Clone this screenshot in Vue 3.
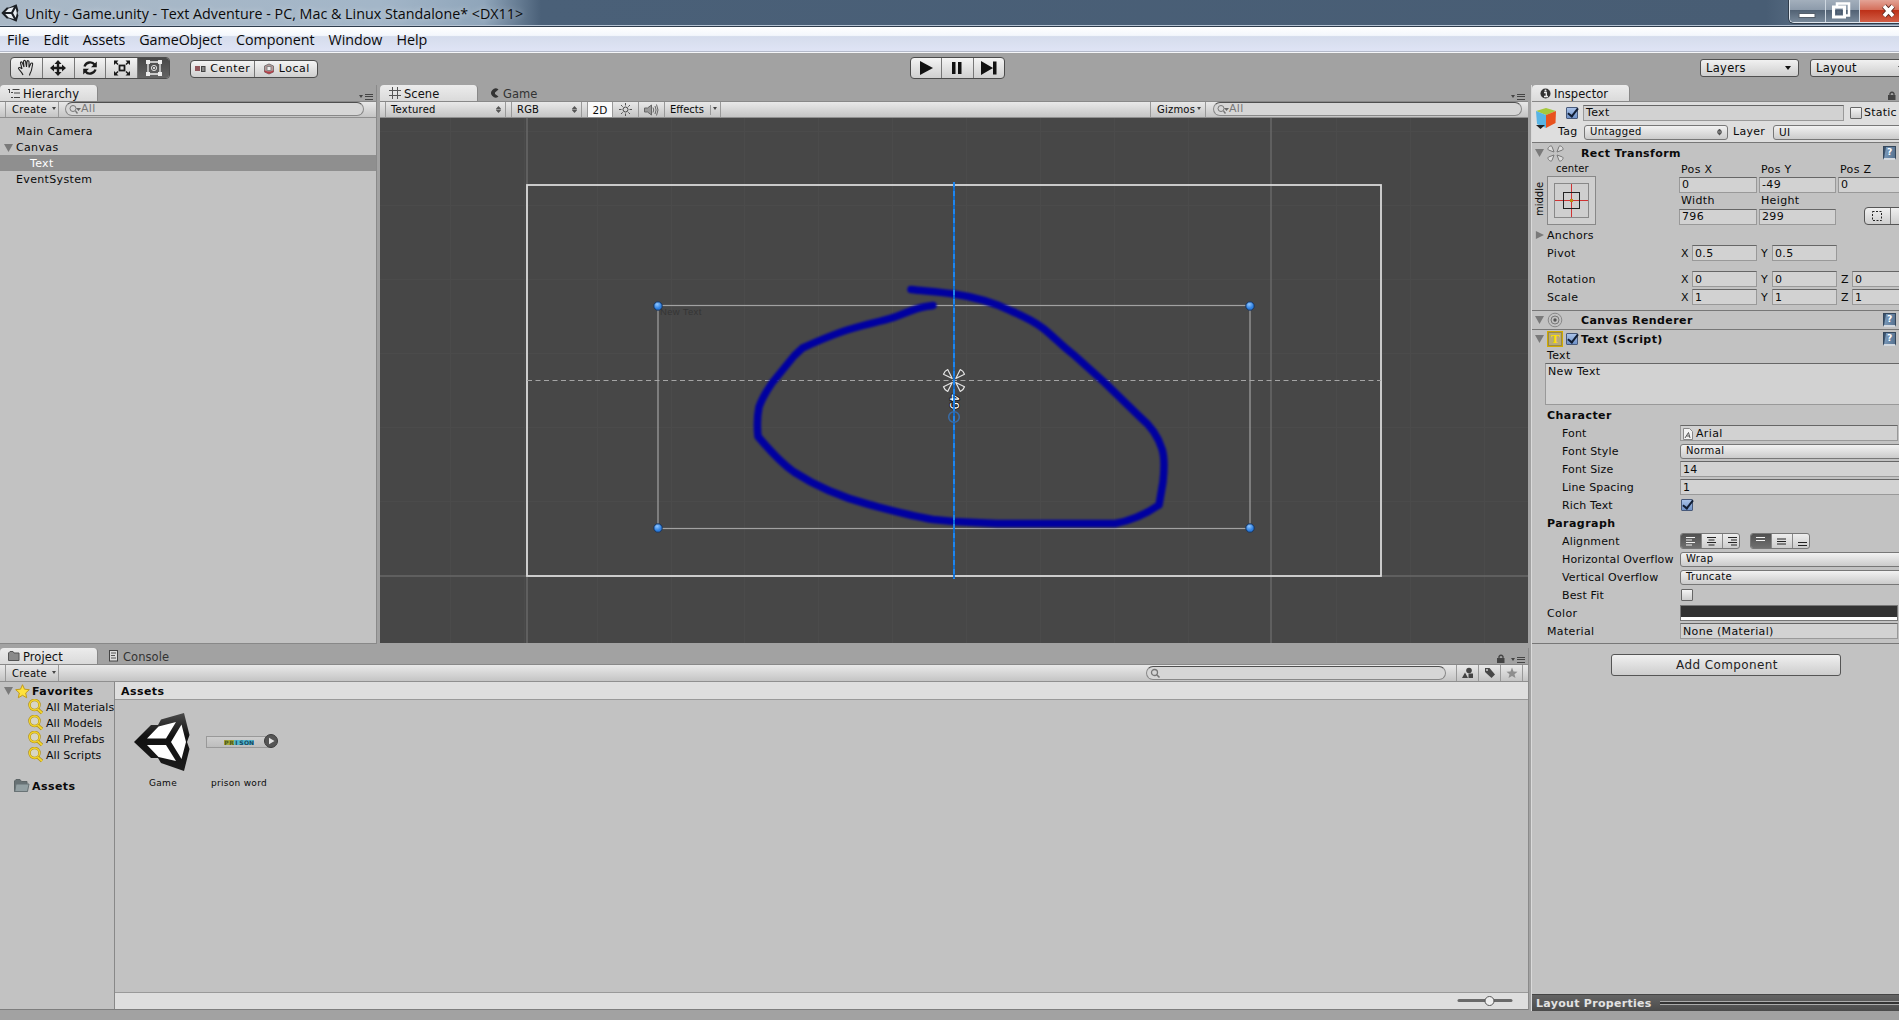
<script setup>
const menus = ['File', 'Edit', 'Assets', 'GameObject', 'Component', 'Window', 'Help']
const searches = ['All Materials', 'All Models', 'All Prefabs', 'All Scripts']
const vectors = [
  { name: 'Rotation', value: '0' },
  { name: 'Scale', value: '1' }
]
const gridX = [450, 524, 597, 671, 744, 818, 892, 966, 1040, 1114, 1188, 1336, 1410, 1484]
const gridY = [131, 205, 279, 353, 427, 501]
const alignLines = [
  'M5 3.5h9M5 6h6M5 8.500h9M5 11h6',
  'M5 3.500h9M6.500 6h6M5 8.500h9M6.500 11h6',
  'M5 3.500h9M8 6h6M5 8.500h9M8 11h6'
]
const vertLines = ['M5 3.500h9M5 6.500h9', 'M5 5h9M5 7.500h9M5 10h9', 'M5 8.500h9M5 11.500h9']
</script>

<template>
  <div class="app">
    <header class="titlebar">
      <svg class="logo" width="18" height="18" viewBox="0 0 60 60">
        <path fill="#1b1f24" d="M1 30 19 12 27 12 52 1 58 22 55 30 58 38 52 59 27 48 19 48Z" />
        <path fill="#e9eef2" d="M14 27 25 15 43 10 34 27ZM14 33 34 33 43 50 25 45ZM40 30 49 14 53 30 49 46Z" />
      </svg>
      <span class="title">Unity - Game.unity - Text Adventure - PC, Mac &amp; Linux Standalone* &lt;DX11&gt;</span>
      <div class="winbtns">
        <span class="wb min"><svg width="35" height="23"><rect x="9" y="13.500" width="16" height="4" fill="#fff" stroke="#56606c" /></svg></span>
        <span class="wb max"><svg width="33" height="23"><path d="M11 7V3.500h12v12h-3" fill="none" stroke="#fff" stroke-width="2.500" /><rect x="7.500" y="7" width="11" height="10" fill="none" stroke="#fff" stroke-width="3" /><rect x="10.500" y="10" width="5" height="4" fill="none" stroke="#4a5a70" /></svg></span>
        <span class="wb close"><svg width="42" height="23"><path d="M24 6 33 16M33 6 24 16" stroke="#5a2a24" stroke-width="5.500" /><path d="M24 6 33 16M33 6 24 16" stroke="#fff" stroke-width="3.600" /></svg></span>
      </div>
    </header>
    <nav class="menubar"><span v-for="m in menus" :key="m">{{ m }}</span></nav>

    <div class="toolbar">
      <div class="group tools">
        <span><svg width="20" height="20" viewBox="0 0 20 20"><path d="M7 17C6 14 3.500 12.500 2.500 10.500 2.500 9 4.500 9 6 11L4.500 5C4.500 3.500 6 3.500 6.500 5L8 9 7.500 3.500C7.700 2 9.300 2 9.600 3.500L10.500 9 11 3.500C11.500 2.200 13 2.500 13 4V9.500L14.800 5.500C15.500 4.500 17 5 16.600 6.500L15.500 12C15 14.500 13.500 15.500 13.500 17.500" fill="none" stroke="#222" stroke-width="1.100" /></svg></span>
        <span><svg width="18" height="18" viewBox="0 0 18 18"><path d="M9 1 12.500 5H10.200V7.800H13V5.500L17 9 13 12.500V10.200H10.200V13H12.500L9 17 5.500 13H7.800V10.200H5V12.500L1 9 5 5.500V7.800H7.800V5H5.500Z" fill="#1a1a1a" /></svg></span>
        <span><svg width="18" height="18" viewBox="0 0 18 18"><path d="M3.500 7.500C5 3 11 2 13.500 5.500M14.500 10.500C13 15 7 16 4.500 12.500" fill="none" stroke="#1a1a1a" stroke-width="2.300" /><path d="M15.800 2.500V8.300H10ZM2.200 15.500V9.700H8Z" fill="#1a1a1a" /></svg></span>
        <span><svg width="20" height="18" viewBox="0 0 20 18"><rect x="7.500" y="6.500" width="5" height="5" fill="none" stroke="#1a1a1a" stroke-width="1.800" /><path d="M2 1.500H6.500L2 6ZM18 1.500H13.500L18 6ZM2 16.500H6.500L2 12ZM18 16.500H13.500L18 12Z" fill="#1a1a1a" /><path d="M3 2.500 6 5.500M17 2.500 14 5.500M3 15.500 6 12.500M17 15.500 14 12.500" stroke="#1a1a1a" stroke-width="1.500" /></svg></span>
        <span class="on"><svg width="18" height="18" viewBox="0 0 18 18"><path d="M3 3H15V15H3Z" fill="none" stroke="#eee" stroke-width="1.300" /><circle cx="9" cy="9" r="2.600" fill="none" stroke="#ddd" /><circle cx="9" cy="9" r="1" fill="#fff" /><path d="M1 1h4v4H1zM13 1h4v4h-4zM1 13h4v4H1zM13 13h4v4h-4z" fill="#eee" /></svg></span>
      </div>
      <div class="group pivot">
        <span><svg width="11" height="8"><rect x="0" y="1" width="5" height="5" fill="#91565b" /><rect x="6.500" y="1.500" width="3.500" height="5" fill="#888" stroke="#444" /></svg>Center</span>
        <span><svg width="12" height="12"><path d="M1.500 3 6 1 10.500 3V9L6 11 1.500 9Z" fill="#b99" stroke="#777" /><path d="M1.500 7C4 9 8 9 10.500 7V9L6 11 1.500 9Z" fill="#b23f48" /><rect x="4" y="3.500" width="4" height="4" fill="#eee" stroke="#888" /></svg>Local</span>
      </div>
      <div class="group play">
        <span><svg width="14" height="14"><path d="M1 0 14 7 1 14Z" fill="#111" /></svg></span>
        <span><svg width="12" height="14"><path d="M1 1h3.500v12H1zM7 1h3.500v12H7z" fill="#111" /></svg></span>
        <span><svg width="16" height="14"><path d="M0 0 12 7 0 14ZM12 .5h3.500v13H12z" fill="#111" /></svg></span>
      </div>
      <div class="drop layers">Layers<i class="dn"></i></div>
      <div class="drop layout">Layout<i class="dn"></i></div>
    </div>

    <div class="work">
      <div class="leftside">
        <div class="upper">
          <section class="hier">
            <div class="tabs">
              <span class="tab active"><svg width="12" height="11"><path d="M0 1.500h2M3 4.500h2M3 9.500h2M4.500 1.500h7M6 5h6M6 9.500h6M1.500 2v3" stroke="#444" fill="none" /></svg>Hierarchy</span>
              <span class="pmenu"><i></i><b></b></span>
            </div>
            <div class="strip">
              <span class="create">Create<i class="dn s"></i></span>
              <span class="search"><svg width="12" height="11"><circle cx="4" cy="4.500" r="3" fill="none" stroke="#777" /><path d="M6.500 7 8.500 9.500" stroke="#777" stroke-width="1.400" /><path d="M7 4h5l-2.500 3z" fill="#666" /></svg>All</span>
            </div>
            <ul class="list">
              <li>Main Camera</li>
              <li class="parent"><i class="tri"></i>Canvas</li>
              <li class="picked">Text</li>
              <li>EventSystem</li>
            </ul>
          </section>

          <section class="scene">
            <div class="tabs">
              <span class="tab active"><svg width="12" height="12"><path d="M3.500 0v12M8.500 0v12M0 3.500h12M0 8.500h12" stroke="#555" /></svg>Scene</span>
              <span class="tab"><svg width="9" height="10"><path d="M8.500 1.500A4.500 4.500 0 1 0 8.500 8.500L5 6V4.500Z" fill="#333" /></svg>Game</span>
              <span class="pmenu"><i></i><b></b></span>
            </div>
            <div class="strip">
              <span class="cell tex">Textured<i class="ud"></i></span>
              <span class="cell rgb">RGB<i class="ud"></i></span>
              <span class="cell two">2D</span>
              <span class="cell sun"><svg width="13" height="13" viewBox="0 0 13 13"><circle cx="6.500" cy="6.500" r="2.500" fill="none" stroke="#444" /><path d="M6.500 0v2.500M6.500 10.500V13M0 6.500h2.500M10.500 6.500H13M2 2l1.700 1.700M9.300 9.300 11 11M11 2 9.300 3.700M2 11l1.700-1.700" stroke="#555" /></svg></span>
              <span class="cell snd"><svg width="15" height="12"><path d="M.5 4h3L7.500 1v10L3.500 8h-3z" fill="#999" stroke="#666" /><path d="M9 3.500Q10.500 6 9 8.500M11 2Q13.200 6 11 10M12.500.5Q15.500 6 12.500 11.500" fill="none" stroke="#666" /></svg></span>
              <span class="cell eff">Effects<em></em><i class="dn s"></i></span>
              <span class="cell giz">Gizmos<i class="dn s"></i></span>
              <span class="search"><svg width="12" height="11"><circle cx="4" cy="4.500" r="3" fill="none" stroke="#777" /><path d="M6.500 7 8.500 9.500" stroke="#777" stroke-width="1.400" /><path d="M7 4h5l-2.500 3z" fill="#666" /></svg>All</span>
            </div>
            <svg class="view" width="1148" height="525" viewBox="380 118 1148 525">
              <defs>
                <radialGradient id="knob" cx=".4" cy=".3"><stop offset="0" stop-color="#8fc6ff" /><stop offset="1" stop-color="#2d7fe0" /></radialGradient>
                <filter id="soft" x="-5%" y="-5%" width="110%" height="110%"><feGaussianBlur stdDeviation=".9" /></filter>
              </defs>
              <rect x="380" y="118" width="1148" height="525" fill="#474747" />
              <g stroke="#4b4b4b">
                <path v-for="x in gridX" :key="'x' + x" :d="`M${x}.5 118V643`" />
                <path v-for="y in gridY" :key="'y' + y" :d="`M380 ${y}.5H1528`" />
              </g>
              <path d="M527 118V643M1271 118V643M380 576H1528" stroke="#686868" stroke-width="1.500" />
              <rect x="527" y="185" width="854" height="391" fill="none" stroke="#d9d9d9" stroke-width="1.800" />
              <rect x="658" y="305.500" width="592" height="223" fill="none" stroke="#a2a2a2" stroke-width="1.200" />
              <path d="M527 380.500H1381" stroke="#a5a5a5" stroke-dasharray="5 3.500" />
              <text x="660" y="315" font-size="9.500" fill="#353535" font-family="Liberation Sans, sans-serif">New Text</text>
              <g filter="url(#soft)">
                <path d="M911 289.500C925 291 940 292 954 294 975 297 993 302 1011 311 1023 316 1034 321 1044 329 1055 338 1063 347 1074 355L1104 382 1140 417C1151 426 1158 436 1162 449 1165 458 1164.500 468 1163 482L1159 505C1146 514 1130 521 1115 523.500H997L954 521.500 933 519.500C911 516 890 510 869 504.500 841 497 817 487 794 472 781 463 771 452 758 436.500 757 427 757 417 759 407 763 396 768 389 772 383L794 356 802.500 348C820 340 836 333 854 328 866 324 879 322 890 318.500 904 314 915 308 926 306.500L933 305.500" fill="none" stroke="#0000a0" stroke-width="7.500" stroke-linecap="round" stroke-linejoin="round" />
              </g>
              <g fill="none" stroke="#e4e4e4" stroke-width="1.200" stroke-linejoin="round">
                <path v-for="s in ['1 1', '-1 1', '1 -1', '-1 -1']" :key="s" :transform="`translate(954 380.500) scale(${s.replace(' ', ',')})`" d="M1.800 2 10.500 6.300Q9.500 9.500 6.300 11Z" />
              </g>
              <text x="0" y="0" transform="translate(949.500 394) rotate(90)" font-size="12" fill="#fff" stroke="#111" stroke-width="1.500" paint-order="stroke" font-family="DejaVu Sans, sans-serif">49</text>
              <path d="M954 182V579" stroke="#0a70dc" stroke-width="1.800" />
              <path d="M954 182V579" stroke="#2389f0" stroke-width="1.800" stroke-dasharray="5 4" />
              <circle cx="954" cy="417" r="5.300" fill="none" stroke="#3a6ca5" stroke-width="1.600" />
              <g v-for="p in [[658, 306], [1250, 306], [658, 528], [1250, 528]]" :key="p.join()">
                <circle :cx="p[0]" :cy="p[1]" r="4.200" fill="url(#knob)" stroke="#16335e" />
              </g>
            </svg>
          </section>
        </div>

        <section class="project">
          <div class="tabs">
            <span class="tab active"><svg width="12" height="10"><path d="M.5 9.500V2L2 .5H5L6 2h5v7.500z" fill="#8a8a8a" stroke="#555" /></svg>Project</span>
            <span class="tab"><svg width="10" height="12"><rect x=".5" y=".5" width="8" height="10.500" fill="#ddd" stroke="#444" /><path d="M2 3h5M2 5.500h4M2 8h5" stroke="#555" /></svg>Console</span>
            <svg class="lock" width="8" height="9"><path d="M2 4V2.500Q4 0 6 2.500V4" fill="none" stroke="#444" stroke-width="1.300" /><rect y="4" width="7.500" height="5" fill="#444" /></svg>
            <span class="pmenu"><i></i><b></b></span>
          </div>
          <div class="strip">
            <span class="create">Create<i class="dn s"></i></span>
            <span class="search"><svg width="12" height="11"><circle cx="4.500" cy="4.500" r="3" fill="none" stroke="#777" stroke-width="1.300" /><path d="M7 7 9.500 9.500" stroke="#777" stroke-width="1.600" /></svg></span>
            <span class="pb"><svg width="12" height="12"><circle cx="7" cy="3.500" r="2.800" fill="#444" /><path d="M0 11 3 5.500 6 11ZM6.500 6.500h4.500V11H6.500Z" fill="#444" /></svg></span>
            <span class="pb"><svg width="12" height="12"><path d="M1 1h4.500L11 7.500 7.500 11 1 5Z" fill="#484848" /><circle cx="3" cy="3" r="1" fill="#ccc" /></svg></span>
            <span class="pb"><svg width="12" height="12"><path d="M6 .5 7.500 4.500 11.500 4.700 8.500 7.200 9.500 11 6 9 2.500 11 3.500 7.200.5 4.700 4.500 4.500Z" fill="#8e8e8e" /></svg></span>
            <span class="pb end"></span>
          </div>
          <div class="pbody">
            <div class="tree">
              <div class="trow fav"><i class="tri"></i><svg width="15" height="15"><path d="M7.500.7 9.500 5.200 14.300 5.700 10.700 9 11.700 13.800 7.500 11.300 3.300 13.800 4.300 9 .7 5.700 5.500 5.200Z" fill="#ffe23b" stroke="#c09a1e" /></svg><strong>Favorites</strong></div>
              <div v-for="s in searches" :key="s" class="trow sub"><svg width="16" height="16"><circle cx="6.500" cy="6" r="5" fill="#d8d6c4" stroke="#b08e14" stroke-width="2.400" /><circle cx="6.500" cy="6" r="5" fill="none" stroke="#f4d62c" stroke-width="1.300" /><path d="M9.500 10 14 14" stroke="#b08e14" stroke-width="3.200" /><path d="M9.500 10 14 14" stroke="#f4d62c" stroke-width="1.700" /></svg><span>{{ s }}</span></div>
              <div class="trow root"><svg width="16" height="14"><path d="M.5 12.500V2L2 .5H6L7.500 2.500H13V12.500Z" fill="#677174" stroke="#5d6567" /><path d="M2 5H15L13.500 12.500H.8Z" fill="#93a0a3" stroke="#697376" /></svg><strong>Assets</strong></div>
            </div>
            <div class="assets">
              <div class="crumb">Assets</div>
              <div class="grid">
                <div class="asset">
                  <div class="thumb"><svg width="58" height="60" viewBox="0 0 58 60"><defs><linearGradient id="ug" x1="0" y1="0" x2="0" y2="1"><stop offset="0" stop-color="#4a4a4a" /><stop offset=".4" stop-color="#111" /><stop offset="1" stop-color="#1c1c1c" /></linearGradient></defs><path fill="url(#ug)" d="M1 30 18 13 25 13 28 7.500 51 1 56.500 23 54 30 56.500 37 51 59 28 51 25 46 18 46Z" /><path fill="#fff" d="M14 26.500 25.500 14.500 43 10 33 26.500ZM14 33 33 33 43 49 25.500 45ZM38 30 48.500 12.500 53 30 48.500 47Z" /></svg></div>
                  <span>Game</span>
                </div>
                <div class="asset pw">
                  <div class="thumb"><div class="word"><b>P</b><b>R</b><b>I</b><b>S</b><b>O</b><b>N</b></div><svg class="go" width="16" height="16"><circle cx="8" cy="8" r="6.500" fill="#555" stroke="#3b3b3b" /><path d="M6 4.800 11.500 8 6 11.200Z" fill="#e3e3e3" /></svg></div>
                  <span>prison word</span>
                </div>
              </div>
              <div class="foot"><svg width="58" height="12"><path d="M2 5.500H54" stroke="#6a6a6a" stroke-width="3" stroke-linecap="round" /><circle cx="32.500" cy="6" r="4.500" fill="#eee" stroke="#555" /></svg></div>
            </div>
          </div>
        </section>
      </div>

      <aside class="insp">
        <div class="tabs">
          <span class="tab active"><svg width="11" height="11"><circle cx="5.500" cy="5.500" r="5" fill="#333" /><path d="M4 4.500h2.300V8M4 8.500h4" stroke="#eee" fill="none" stroke-width="1.300" /><circle cx="5.500" cy="2.500" r="1" fill="#eee" /></svg>Inspector</span>
          <svg class="lock" width="8" height="9"><path d="M2 4V2.500Q4 0 6 2.500V4" fill="none" stroke="#444" stroke-width="1.300" /><rect y="4" width="7.500" height="5" fill="#444" /></svg>
        </div>
        <div class="ohead">
          <svg class="cube" width="24" height="24"><path d="M2 4 12 1 22 4 12 8Z" fill="#a5c83c" /><path d="M2 4 12 8V21L3 17Z" fill="#58b4e4" /><path d="M12 8 22 4 21.500 16 12 21Z" fill="#e8521e" /><path d="M2 18h9L6.500 22Z" fill="#222" /></svg>
          <div class="ofields">
            <div class="orow"><i class="check on"></i><span class="field name">Text</span><i class="check"></i><span class="st">Static</span></div>
            <div class="orow two"><span class="tag">Tag</span><span class="sel tagsel">Untagged<i class="ud"></i></span><span class="lay">Layer</span><span class="sel laysel">UI</span></div>
          </div>
        </div>

        <div class="chead rt"><i class="tri"></i><svg width="17" height="17" viewBox="-8.500 -8.500 17 17"><path v-for="a in [0, 90, 180, 270]" :key="a" :transform="`rotate(${a})`" d="M1.500 1.500 3.500 7C5 9 9 5 7 3.500Z" fill="#ddd" stroke="#777" /></svg><strong>Rect Transform</strong><i class="help">?</i></div>
        <div class="rect">
          <div class="anchor">
            <span class="ac">center</span><span class="am">middle</span>
            <svg width="49" height="49"><rect x=".5" y=".5" width="48" height="48" fill="#cfcfcf" stroke="#888" /><rect x="7.500" y="7.500" width="34" height="34" fill="none" stroke="#888" /><path d="M24.500 8v33M8 24.500h33" stroke="#cf3333" /><rect x="16.500" y="16.500" width="16" height="16" fill="none" stroke="#222" /><rect x="23" y="23" width="3" height="3" fill="#b98a12" /></svg>
          </div>
          <div class="pos">
            <span>Pos X</span><span>Pos Y</span><span>Pos Z</span>
            <b class="field">0</b><b class="field">-49</b><b class="field">0</b>
            <span>Width</span><span>Height</span><span></span>
            <b class="field">796</b><b class="field">299</b><div class="blue"><svg width="12" height="12"><rect x="1.500" y="1.500" width="9" height="9" fill="none" stroke="#222" stroke-dasharray="2 1.500" /></svg></div>
          </div>
        </div>
        <div class="prow anchors"><i class="tri r"></i><span class="lbl">Anchors</span></div>
        <div class="prow"><label>Pivot</label><span class="ax">X</span><b class="field v">0.5</b><span class="ax">Y</span><b class="field v">0.5</b></div>
        <div class="gap8"></div>
        <div v-for="v in vectors" :key="v.name" class="prow"><label>{{ v.name }}</label><span class="ax">X</span><b class="field v">{{ v.value }}</b><span class="ax">Y</span><b class="field v">{{ v.value }}</b><span class="ax">Z</span><b class="field v last">{{ v.value }}</b></div>

        <div class="chead cr"><i class="tri"></i><svg width="16" height="16"><circle cx="8" cy="8" r="6.800" fill="none" stroke="#888" /><circle cx="8" cy="8" r="4" fill="none" stroke="#777" /><circle cx="8" cy="8" r="1.700" fill="#555" /></svg><strong>Canvas Renderer</strong><i class="help">?</i></div>
        <div class="chead"><i class="tri"></i><span class="ticon">T</span><i class="check on"></i><strong class="near">Text (Script)</strong><i class="help">?</i></div>
        <div class="tlabel">Text</div>
        <div class="field area">New Text</div>
        <div class="prow bold"><span class="lbl">Character</span></div>
        <div class="prow in"><label>Font</label><span class="field w obj"><svg width="10" height="12"><path d="M.5.500h6l3 3v8h-9z" fill="#f3f3f3" stroke="#888" /><path d="M2 10 5.500 4.500 7 10M3.500 8h3" stroke="#555" fill="none" /></svg>Arial</span></div>
        <div class="prow in"><label>Font Style</label><span class="sel w">Normal</span></div>
        <div class="prow in"><label>Font Size</label><span class="field w cut">14</span></div>
        <div class="prow in"><label>Line Spacing</label><span class="field w cut">1</span></div>
        <div class="prow in"><label>Rich Text</label><i class="check on box"></i></div>
        <div class="prow bold"><span class="lbl">Paragraph</span></div>
        <div class="prow in"><label>Alignment</label>
          <div class="aligns"><span v-for="(d, i) in alignLines" :key="i" :class="{ on: i === 0 }"><svg width="20" height="15"><path :d="d" /></svg></span></div>
          <div class="aligns"><span v-for="(d, i) in vertLines" :key="i" :class="{ on: i === 0 }"><svg width="20" height="15"><path :d="d" /></svg></span></div>
        </div>
        <div class="prow in"><label>Horizontal Overflow</label><span class="sel w">Wrap</span></div>
        <div class="prow in"><label>Vertical Overflow</label><span class="sel w">Truncate</span></div>
        <div class="prow in"><label>Best Fit</label><i class="check box"></i></div>
        <div class="prow"><label>Color</label><span class="color"></span></div>
        <div class="prow"><label>Material</label><span class="field w obj">None (Material)</span></div>
        <div class="addwrap"><button>Add Component</button></div>
        <div class="lprops"><span>Layout Properties</span><i></i></div>
      </aside>
    </div>
  </div>
</template>

<style>
html, body { margin: 0; overflow: hidden; }
</style>

<style scoped>
* { box-sizing: border-box; }
.app { width: 1899px; height: 1020px; display: flex; flex-direction: column; overflow: hidden; background: #a2a2a2; font: 11px/16px "DejaVu Sans", sans-serif; letter-spacing: 0.35px; color: #0a0a0a; white-space: nowrap; }
svg { flex: none; display: block; }
i, b { font-style: normal; font-weight: normal; }

.titlebar { height: 27px; flex: none; display: flex; align-items: flex-start; border-bottom: 1px solid #2e3c4c; box-shadow: inset 0 -1px #b5c3d3; background: linear-gradient(90deg, #a9b8c6 0, #a3b6c8 20%, #8fa5ba 25.500%, #4a6078 28.500%, #485d74 93%, #7d90a5 100%); }
.logo { margin: 4px 0 0 1px; }
.title { margin: 1px 0 0 6px; font: 14.300px/25px "Open Sans", "Noto Sans", sans-serif; letter-spacing: 0; text-shadow: 0 0 6px #fff8; }
.winbtns { margin-left: auto; display: flex; height: 23px; border: 1px solid #dfe6ee; border-top: 0; border-right: 0; border-bottom-left-radius: 5px; box-shadow: 0 0 0 1px #303c4a; overflow: hidden; width: 110px; }
.wb { flex: none; height: 23px; background: linear-gradient(#a3afbc 0, #8d9bab 42%, #526274 45%, #7b8c9d 100%); border-right: 1px solid #ced7e0; }
.wb.close { border: 0; background: linear-gradient(#e3a396 0, #d5705c 42%, #bd3018 45%, #d4624a 100%); }

.menubar { height: 25px; flex: none; display: flex; gap: 14px; padding-left: 7px; border-bottom: 1px solid #b3b9c9; background: linear-gradient(#fff 0, #f4f7fc 35%, #d5dcec 40%, #dfe4f5 100%); font: 14.300px/25px "Open Sans", "Noto Sans", sans-serif; letter-spacing: -0.030px; }

.toolbar { height: 33px; flex: none; display: flex; align-items: flex-start; border-top: 1px solid #f4f5f8; }
.group { display: flex; flex: none; border: 1px solid #4c4c4c; border-radius: 4px; background: linear-gradient(#f4f4f4, #cfcfcf); }
.group span { display: flex; align-items: center; justify-content: center; border-left: 1px solid #777; }
.group span:first-child { border-left: 0; }
.tools { margin: 4px 0 0 10px; width: 160px; height: 22px; }
.tools span { flex: 1; }
.group .on { background: linear-gradient(#484848, #646464); border-radius: 0 3px 3px 0; }
.pivot { margin: 7px 0 0 20px; width: 128px; height: 18px; font-size: 11px; letter-spacing: 0.500px; }
.pivot span { width: 63px; gap: 4px; }
.pivot span:first-child { width: 64px; }
.play { margin: 4px 0 0 592px; width: 95px; height: 22px; }
.play span { flex: 1; }
.drop { display: flex; flex: none; align-items: center; height: 18px; padding: 0 7px 0 5px; border: 1px solid #505050; border-radius: 3px; background: linear-gradient(#f1f1f1, #cecece); font-size: 11.500px; letter-spacing: 0.300px; }
.drop .dn { margin-left: auto; }
.layers { margin: 6px 0 0 695px; width: 99px; }
.layout { margin: 6px 0 0 11px; width: 99px; }
.layout.drop { padding-right: 4px; }
.dn { width: 0; height: 0; border: 3px solid transparent; border-top: 4px solid #111; border-bottom: 0; }
.dn.s { border-width: 2.500px; border-top: 3px solid #444; border-bottom: 0; margin-top: -3px; }
.ud { width: 5px; height: 7px; clip-path: polygon(50% 0, 100% 38%, 100% 45%, 0 45%, 0 55%, 100% 55%, 100% 62%, 50% 100%, 0 62%, 0 38%); background: #555; }

.work { flex: 1; display: flex; height: 935px; }
.leftside { width: 1529px; display: flex; flex-direction: column; flex: none; }
.upper { height: 563px; display: flex; padding-bottom: 4px; flex: none; }
.tabs { height: 16px; display: flex; position: relative; z-index: 1; font-size: 11.500px; line-height: 18px; letter-spacing: 0.050px; flex: none; }
.tab { width: 98px; padding-left: 10px; padding-top: 2px; display: flex; gap: 4px; align-items: center; color: #333; }
.tab svg { margin-top: -2px; }
.tab.active { background: linear-gradient(#ececec, #dadada); border-radius: 4px 4px 0 0; border-right: 1px solid #888; color: #111; }
.pmenu { margin-left: auto; margin-right: 3px; display: flex; align-items: center; gap: 2px; padding-top: 7px; }
.pmenu i { border: 2px solid transparent; border-top: 3px solid #444; border-bottom: 0; }
.pmenu b { width: 8px; height: 6px; border-top: 1px solid #444; border-bottom: 1px solid #444; background: linear-gradient(#444, #444) center / 8px 1px no-repeat; }
.strip { height: 17px; flex: none; display: flex; align-items: stretch; background: linear-gradient(#e9e9e9, #c4c4c4); border-top: 1px solid #888; border-bottom: 1px solid #8f8f8f; }
.create { margin-left: 5px; width: 54px; padding-left: 6px; display: flex; align-items: center; gap: 5px; border: solid #999; border-width: 0 1px; font-size: 10px; letter-spacing: 0.300px; }
.search { height: 14px; margin-top: 0; display: flex; align-items: center; gap: 0; padding-left: 3px; border: 1px solid #888; border-top-color: #4f4f4f; border-radius: 8px; background: #d6d6d6; color: #777; }

.hier { width: 377px; display: flex; flex-direction: column; border-right: 1px solid #8a8a8a; }
.hier .tab { padding-left: 8px; gap: 3px; }
.hier .search { margin-left: 6px; width: 299px; }
.list { flex: 1; margin: 0; padding: 5px 0 0; list-style: none; background: #c2c2c2; border-bottom: 1px solid #888; }
.list li { height: 16px; padding: 2px 0 0 16px; display: flex; align-items: center; line-height: 14px; }
.list .parent { padding-left: 4px; gap: 3px; }
.list .picked { padding-left: 30px; background: #8f8f8f; color: #fff; }
.tri { width: 9px; height: 8px; background: #7a7a7a; clip-path: polygon(0 0, 100% 0, 50% 100%); flex: none; }
.tri.r { clip-path: polygon(10% 0, 100% 50%, 10% 100%); }

.scene { margin-left: 3px; width: 1148px; display: flex; flex-direction: column; }
.scene .tabs .tab.active { padding-left: 9px; gap: 3px; }
.scene .tabs .tab + .tab { padding-left: 12px; }
.cell { display: flex; align-items: center; border-right: 1px solid #999; font-size: 10px; letter-spacing: 0.200px; }
.cell.tex { margin-left: 5px; width: 121px; padding: 0 4px 0 5px; border-left: 1px solid #999; justify-content: space-between; }
.cell.rgb { margin-left: 5px; width: 71px; padding: 0 4px 0 5px; border-left: 1px solid #999; justify-content: space-between; }
.cell.two { margin-left: 5px; width: 26px; justify-content: center; background: #fafafa; border-left: 1px solid #999; font-size: 10.500px; }
.cell.sun { width: 26px; justify-content: center; }
.cell.snd { width: 26px; justify-content: center; }
.cell.eff { width: 56px; padding: 0 3px 0 5px; font-size: 10px; letter-spacing: 0; }
.cell.eff em { width: 1px; height: 10px; background: #999; margin: 0 2px 0 auto; }
.cell.giz { margin-left: auto; width: 56px; padding: 0 4px 0 6px; justify-content: space-between; border-left: 1px solid #999; }
.scene .search { margin: 0 6px 0 7px; width: 309px; }

.project { flex: none; width: 1529px; height: 362px; display: flex; flex-direction: column; border-right: 1px solid #8a8a8a; }
.project .tab.active { padding-left: 8px; gap: 3px; }
.project .tab + .tab { padding-left: 11px; }
.lock { margin-left: auto; margin-top: 6px; }
.project .lock + .pmenu { margin-left: 6px; }
.project .strip { height: 18px; }
.project .create { padding-top: 1px; }
.project .search { margin-left: auto; width: 300px; margin-right: 10px; margin-top: 1px; }
.pb { width: 22px; border-left: 1px solid #999; display: flex; align-items: center; justify-content: center; }
.pb.end { width: 6px; }
.pbody { flex: 1; display: flex; border-bottom: 1px solid #7e7e7e; }
.tree { width: 115px; flex: none; background: #c2c2c2; border-right: 1px solid #888; overflow: hidden; padding-top: 1px; }
.trow { height: 16px; display: flex; align-items: center; }
.trow strong, .crumb { font-size: 11px; letter-spacing: 0.450px; }
.trow strong, .trow span { padding-top: 2px; }
.fav { padding-left: 4px; gap: 2px; }
.sub { padding-left: 28px; gap: 2px; font-size: 11px; letter-spacing: 0.050px; }
.root { padding-left: 14px; gap: 2px; margin-top: 15px; }
.assets { flex: 1; display: flex; flex-direction: column; background: #c2c2c2; }
.crumb { height: 18px; padding-left: 6px; line-height: 19px; font-weight: bold; background: #dedede; border-bottom: 1px solid #999; }
.grid { flex: 1; display: flex; padding: 12px 0 0 10px; }
.asset { width: 76px; display: flex; flex-direction: column; align-items: center; font-size: 9px; letter-spacing: 0.300px; gap: 3px; }
.thumb { height: 60px; display: flex; align-items: center; position: relative; }
.asset:first-child .thumb { margin-left: -2px; }
.word { width: 66px; height: 12px; padding: 3px 17px 2px; display: flex; background: linear-gradient(#cecece, #bdbdbd); border: 1px solid #999; }
.word b { flex: 1; font: bold 6px/6px "DejaVu Sans", sans-serif; letter-spacing: 0; text-align: center; color: #174860; background: #52b6cd; }
.word b:nth-child(-n+2) { background: #a5a83c; color: #4c5a1c; }
.go { position: absolute; right: -7px; top: 21px; }
.foot { height: 17px; background: #dedede; border-top: 1px solid #999; display: flex; justify-content: flex-end; align-items: center; padding-right: 13px; }

.insp { margin-left: 2px; width: 368px; display: flex; flex-direction: column; overflow: hidden; height: 926px; border-left: 1px solid #dadada; background: #c2c2c2; }
.insp .tabs { background: #a2a2a2; }
.insp .tab { padding-left: 8px; gap: 3px; }
.insp .lock { margin-right: 3px; }
.ohead { height: 42px; flex: none; display: flex; border-top: 1px solid #888; border-bottom: 1px solid #777; background: #dedede; padding: 3px 0 0 2px; }
.cube { margin-top: 2px; }
.ofields { flex: 1; min-width: 0; display: flex; flex-direction: column; gap: 3px; }
.orow { display: flex; align-items: center; height: 16px; padding-left: 8px; }
.check { width: 12px; height: 12px; border: 1px solid #666; border-radius: 1px; background: linear-gradient(#f4f4f4, #ccc); flex: none; position: relative; }
.check.box { margin-left: 1px; }
.check.on { background: linear-gradient(#a9c2e8, #6f92c8); border-color: #47597a; }
.check.on::after { content: ""; position: absolute; left: 3px; top: -2px; width: 4px; height: 9px; border: solid #101d33; border-width: 0 2px 2px 0; transform: rotate(38deg); }
.field { display: flex; align-items: center; height: 16px; padding-left: 2px; background: #d2d2d2; border: 1px solid #999; border-top-color: #666; }
.field.name { width: 261px; margin: 0 6px 0 5px; }
.st { margin-left: 2px; letter-spacing: 0.200px; }
.orow.two { padding-left: 0; }
.orow.two > * { flex: none; }
.tag { width: 26px; letter-spacing: 0.300px; }
.sel { display: flex; align-items: center; height: 15px; padding: 0 5px; font-size: 10px; background: linear-gradient(#f2f2f2, #cbcbcb); border: 1px solid #777; border-radius: 3px; }
.tagsel { width: 144px; justify-content: space-between; }
.lay { width: 45px; padding-left: 5px; letter-spacing: 0.300px; }
.laysel { width: 150px; font-size: 10.500px; }
.chead { height: 19px; flex: none; display: flex; align-items: center; padding: 0 3px 0 3px; border-top: 1px solid #777; position: relative; }
.chead .tri { margin-right: 3px; }
.chead strong { margin-left: 18px; padding-top: 1px; font-size: 11px; letter-spacing: 0.400px; }
.chead.rt { border-top: 0; height: 19px; padding-top: 1px; }
.chead.rt svg { margin-right: -1px; }
.chead strong.near { margin-left: 3px; }
.chead .check { margin-left: 3px; }
.help { margin-left: auto; width: 13px; height: 14px; background: linear-gradient(100deg, #3c536d 12%, #7796b6 20%, #56718f); border: 1px solid #34475c; border-bottom: 2px solid #d4d9df; color: #fff; font: bold 9px/11px "DejaVu Sans", sans-serif; text-align: center; letter-spacing: 0; }
.ticon { width: 16px; height: 16px; background: #b7ab7a; border: 1px solid #d2ab00; outline: 1px solid #9a8a44; outline-offset: -2px; font: bold 13px/14px "Liberation Serif", serif; text-align: center; color: #ffdf00; letter-spacing: 0; flex: none; }
.rect { height: 64px; flex: none; display: flex; }
.anchor { width: 147px; flex: none; padding: 14px 0 0 15px; position: relative; }
.ac { position: absolute; left: 24px; top: 0; font-size: 10px; line-height: 14px; letter-spacing: 0.100px; }
.am { position: absolute; left: -11px; top: 29px; width: 38px; text-align: center; font-size: 10px; letter-spacing: 0; transform: rotate(-90deg); }
.pos { display: grid; grid-template-columns: 78px 77px 78px; grid-template-rows: 15px 16px 16px 16px; column-gap: 2px; line-height: 16px; }
.pos span { padding-left: 2px; }
.blue { margin-left: 26px; width: 53px; height: 18px; margin-top: -2px; padding-left: 6px; display: flex; align-items: center; border: 1px solid #555; border-radius: 4px; background: linear-gradient(90deg, transparent 25px, #777 25px 26px, transparent 26px), linear-gradient(#f0f0f0, #cecece); }
.prow { height: 18px; flex: none; display: flex; align-items: center; padding-left: 15px; }
.prow > * { flex: none; }
.prow label, .lbl, .ax { padding-top: 2px; }
.prow label { width: 133px; }
.prow .field { padding-top: 1px; }
.prow.in { padding-left: 30px; }
.prow.in label { width: 118px; letter-spacing: 0.150px; }
.prow.bold { font-weight: bold; font-size: 11px; letter-spacing: 0.450px; }
.prow.anchors { padding-left: 3px; gap: 3px; }
.ax { width: 12px; padding-left: 1px; }
.field.v { width: 65px; margin-right: 3px; }
.field.v.last { width: 100px; }
.gap8 { height: 8px; flex: none; }
.chead.cr { margin-top: 4px; }
.tlabel { height: 15px; flex: none; padding-left: 15px; line-height: 16px; }
.field.area { margin-left: 13px; width: 380px; height: 42px; flex: none; align-items: flex-start; line-height: 15px; margin-bottom: 1px; }
.field.w { width: 218px; }
.field.w.cut { width: 230px; }
.obj { gap: 3px; }
.sel.w { width: 230px; }
.aligns { display: flex; width: 60px; height: 16px; margin-right: 10px; border: 1px solid #777; border-radius: 3px; background: linear-gradient(#eee, #ccc); overflow: hidden; }
.aligns span { flex: 1; border-left: 1px solid #888; }
.aligns span:first-child { border-left: 0; }
.aligns span.on { background: linear-gradient(#505050, #707070); }
.aligns path { stroke: #222; }
.aligns .on path { stroke: #f2f2f2; }
.color { width: 218px; height: 16px; background: #323232; border: 1px solid #777; box-shadow: inset 0 -3px #fff; }
.addwrap { border-top: 1px solid #777; margin-top: 3px; padding-top: 10px; display: flex; justify-content: center; width: 387px; flex: none; }
.addwrap button { width: 230px; height: 22px; padding: 0 0 0 3px; border: 1px solid #555; border-radius: 3px; background: linear-gradient(#f0f0f0, #cdcdcd); font: 12px/18px "DejaVu Sans", sans-serif; color: #222; letter-spacing: 0.400px; }
.lprops { margin-top: auto; height: 17px; flex: none; display: flex; align-items: center; gap: 8px; padding-left: 4px; background: linear-gradient(#646464, #4b4b4b); border-top: 1px solid #444; color: #e2e2e2; font-weight: bold; font-size: 11px; letter-spacing: 0.300px; }
.lprops span { padding-top: 1px; }
.lprops i { flex: 1; height: 4px; border-top: 1px solid #aaa; border-bottom: 1px solid #aaa; background: #333; }
</style>
